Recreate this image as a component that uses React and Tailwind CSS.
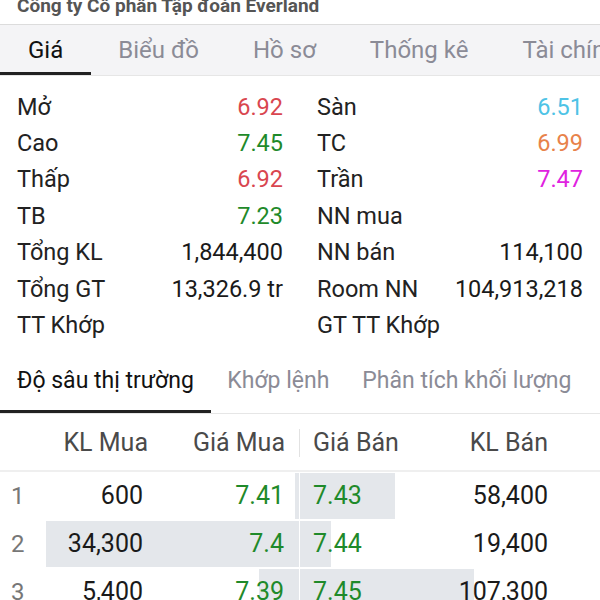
import React from "react";

const tabs = ["Giá", "Biểu đồ", "Hồ sơ", "Thống kê", "Tài chính"];

const leftStats = [
  { label: "Mở", value: "6.92", color: "text-[#d9464f]" },
  { label: "Cao", value: "7.45", color: "text-[#1f8a2a]" },
  { label: "Thấp", value: "6.92", color: "text-[#d9464f]" },
  { label: "TB", value: "7.23", color: "text-[#1f8a2a]" },
  { label: "Tổng KL", value: "1,844,400", color: "text-[#1a1a1a]" },
  { label: "Tổng GT", value: "13,326.9 tr", color: "text-[#1a1a1a]" },
  { label: "TT Khớp", value: "", color: "" },
];

const rightStats = [
  { label: "Sàn", value: "6.51", color: "text-[#4ec3e6]" },
  { label: "TC", value: "6.99", color: "text-[#e8824a]" },
  { label: "Trần", value: "7.47", color: "text-[#e022e0]" },
  { label: "NN mua", value: "", color: "" },
  { label: "NN bán", value: "114,100", color: "text-[#1a1a1a]" },
  { label: "Room NN", value: "104,913,218", color: "text-[#1a1a1a]" },
  { label: "GT TT Khớp", value: "", color: "" },
];

const subTabs = ["Độ sâu thị trường", "Khớp lệnh", "Phân tích khối lượng"];

const depth = [
  { bidVol: 600, bid: "7.41", ask: "7.43", askVol: 58400 },
  { bidVol: 34300, bid: "7.4", ask: "7.44", askVol: 19400 },
  { bidVol: 5400, bid: "7.39", ask: "7.45", askVol: 107300 },
];

// bar scale in px per share, one per side
const bidScale = 253 / 34300;
const askScale = 174 / 107300;

const fmt = (n) => n.toLocaleString("en-US");

function StatColumn({ rows }) {
  return (
    <div className="w-1/2 px-[17px]">
      {rows.map((r) => (
        <div key={r.label} className="flex justify-between h-[36.4px] items-center">
          <span className="text-[#222]">{r.label}</span>
          <span className={r.color}>{r.value}</span>
        </div>
      ))}
    </div>
  );
}

export default function App() {
  return (
    <div className="w-[600px] h-[600px] overflow-hidden bg-white font-['Roboto',sans-serif]">
      {/* company title, cut at the top */}
      <div className="h-[24px] overflow-hidden px-[17px]">
        <div className="text-[19px] leading-[19px] font-bold text-[#555] mt-[-4px] whitespace-nowrap">
          Công ty Cổ phần Tập đoàn Everland
        </div>
      </div>

      {/* main tabs */}
      <div className="flex h-[52px] border-t border-b border-t-[#dcdcdc] border-b-[#e6e6e6] bg-[#f4f4f6] overflow-hidden whitespace-nowrap">
        {tabs.map((t, i) => (
          <div
            key={t}
            className={
              i === 0
                ? "flex items-center px-[28px] pt-[3px] text-[24px] text-[#111] border-b-[3px] border-[#222]"
                : "flex items-center px-[27px] pt-[3px] text-[24px] text-[#8b8b96] border-b-[3px] border-transparent"
            }
          >
            {t}
          </div>
        ))}
      </div>

      {/* price info */}
      <div className="flex pt-[13px] text-[23.5px]">
        <StatColumn rows={leftStats} />
        <StatColumn rows={rightStats} />
      </div>

      {/* sub tabs */}
      <div className="flex mt-[10px] h-[60px] border-b border-[#e6e6e6] whitespace-nowrap">
        {subTabs.map((t, i) => (
          <div
            key={t}
            className={
              i === 0
                ? "flex items-center px-[17px] text-[23px] text-[#111] border-b-[3px] border-[#222]"
                : "flex items-center px-[16.5px] text-[23px] text-[#8b8b96] border-b-[3px] border-transparent"
            }
          >
            {t}
          </div>
        ))}
      </div>

      {/* depth header */}
      <div className="flex h-[58px] pt-[2px] items-center border-b-2 border-[#efefef] text-[25px] text-[#4a4a4a]">
        <div className="w-[299px] flex pl-[11px] pr-[14px]">
          <span className="w-[30px]" />
          <span className="w-[107px] text-right">KL Mua</span>
          <span className="flex-1 text-right">Giá Mua</span>
        </div>
        <div className="w-px h-[28px] bg-[#e2e2e2]" />
        <div className="flex-1 flex pl-[13px] pr-[52px]">
          <span>Giá Bán</span>
          <span className="flex-1 text-right">KL Bán</span>
        </div>
      </div>

      {/* depth rows */}
      {depth.map((r, i) => (
        <div key={i} className="flex h-[48px] py-[1px] text-[25px]">
          <div className="relative w-[299px]">
            <div
              className="absolute right-0 top-0 bottom-0 bg-[#e4e7eb]"
              style={{ width: r.bidVol * bidScale }}
            />
            <div className="relative flex items-center h-full pl-[11px] pr-[15px]">
              <span className="w-[30px] text-[24px] text-[#777]">{i + 1}</span>
              <span className="w-[102px] text-right text-[#1a1a1a]">{fmt(r.bidVol)}</span>
              <span className="flex-1 text-right text-[#1f8a2a]">{r.bid}</span>
            </div>
          </div>
          <div className="w-px bg-white" />
          <div className="relative flex-1">
            <div
              className="absolute left-0 top-0 bottom-0 bg-[#e4e7eb]"
              style={{ width: r.askVol * askScale }}
            />
            <div className="relative flex items-center h-full pl-[13px] pr-[52px]">
              <span className="text-[#1f8a2a]">{r.ask}</span>
              <span className="flex-1 text-right text-[#1a1a1a]">{fmt(r.askVol)}</span>
            </div>
          </div>
        </div>
      ))}
    </div>
  );
}
